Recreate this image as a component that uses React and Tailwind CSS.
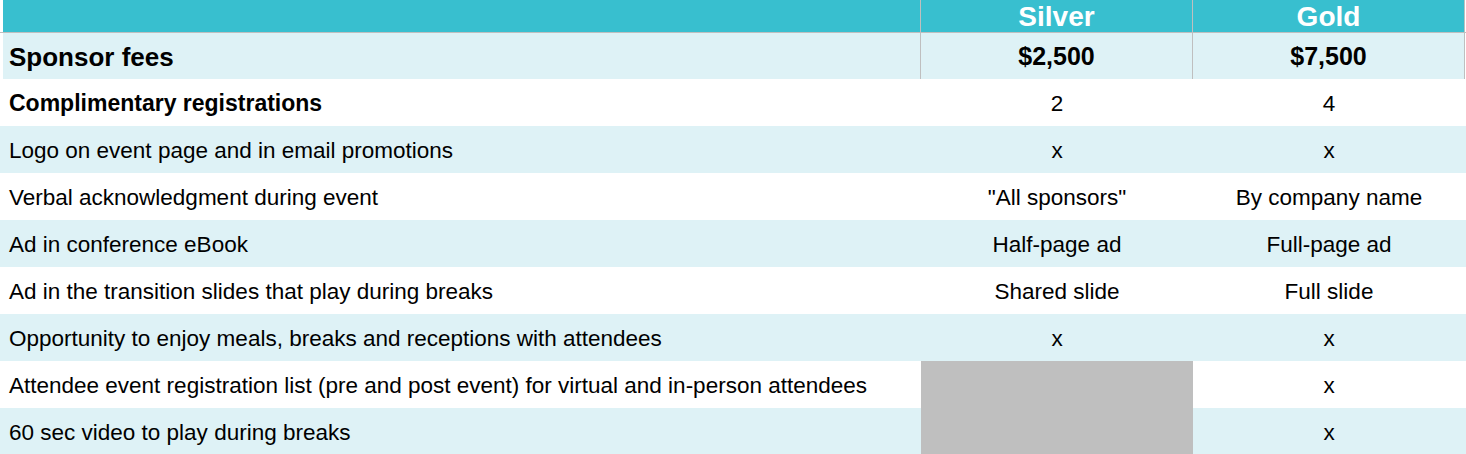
const rows = [
  { label: "Complimentary registrations", silver: "2", gold: "4", bold: true },
  { label: "Logo on event page and in email promotions", silver: "x", gold: "x" },
  { label: "Verbal acknowledgment during event", silver: '"All sponsors"', gold: "By company name" },
  { label: "Ad in conference eBook", silver: "Half-page ad", gold: "Full-page ad" },
  { label: "Ad in the transition slides that play during breaks", silver: "Shared slide", gold: "Full slide" },
  { label: "Opportunity to enjoy meals, breaks and receptions with attendees", silver: "x", gold: "x" },
  {
    label: "Attendee event registration list (pre and post event) for virtual and in-person attendees",
    silver: null,
    gold: "x",
  },
  { label: "60 sec video to play during breaks", silver: null, gold: "x" },
];

export default function App() {
  return (
    <div
      className="w-[1466px] h-[454px] overflow-hidden bg-white text-black"
      style={{ fontFamily: '"Liberation Sans", Arial, sans-serif' }}
    >
      {/* header */}
      <div className="flex h-[33px] border-b border-[#bfbfbf] pl-[3px]">
        <div className="w-[918px] bg-[#38bfcf] border-r border-[#bfbfbf]" />
        <div className="w-[272px] bg-[#38bfcf] border-r border-[#bfbfbf] flex items-center justify-center pt-[2px] text-white font-bold text-[28px] leading-none">
          Silver
        </div>
        <div className="w-[272px] bg-[#38bfcf] border-r border-[#bfbfbf] flex items-center justify-center pt-[2px] text-white font-bold text-[28px] leading-none">
          Gold
        </div>
      </div>
      {/* fees */}
      <div className="flex h-[46px] pl-[3px] font-bold text-[25px]">
        <div className="w-[918px] bg-[#def2f6] border-r border-[#bfbfbf] flex items-center pl-[6px] pt-[2px] text-[26px]">
          Sponsor fees
        </div>
        <div className="w-[272px] bg-[#def2f6] border-r border-[#bfbfbf] flex items-center justify-center pt-[2px]">
          $2,500
        </div>
        <div className="w-[272px] bg-[#def2f6] border-r border-[#bfbfbf] flex items-center justify-center pt-[2px]">
          $7,500
        </div>
      </div>
      {rows.map((r, i) => {
        const bg = i % 2 === 0 ? "bg-white" : "bg-[#def2f6]";
        return (
          <div key={r.label} className={`flex h-[47px] pl-[3px] pt-[2px] text-[22.5px] ${bg}`}>
            <div
              className={`w-[918px] flex items-center pl-[6px] ${r.bold ? "font-bold text-[23px]" : ""}`}
            >
              {r.label}
            </div>
            {r.silver === null ? (
              <div className="w-[272px] -mt-[2px] bg-[#bfbfbf]" />
            ) : (
              <div className="w-[272px] flex items-center justify-center">{r.silver}</div>
            )}
            <div className="w-[272px] flex items-center justify-center">{r.gold}</div>
          </div>
        );
      })}
    </div>
  );
}
